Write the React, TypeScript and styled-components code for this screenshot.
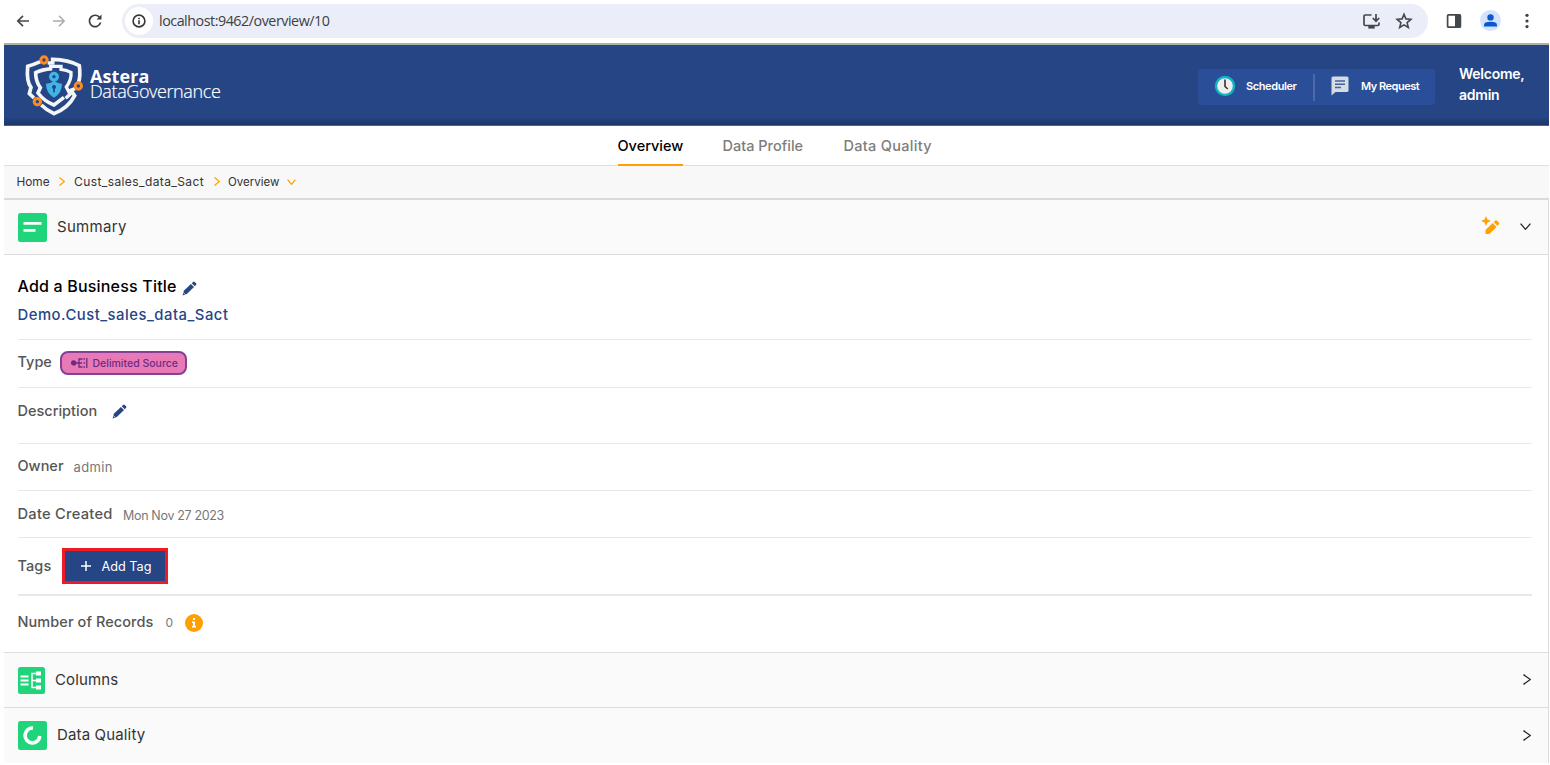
import React from "react";
import styled, { createGlobalStyle } from "styled-components";

const Global = createGlobalStyle`
  *{box-sizing:border-box}
  body{margin:0;background:#fff;overflow:hidden;font-family:Inter,"Liberation Sans",sans-serif;color:#000}
  svg{display:block;flex:none}
`;

const Page = styled.div`height:765px;display:flex;flex-direction:column;`;

const Text = styled.span<{
  $w: number; $size: number; $ls?: number; $weight?: number; $color?: string; $mt?: number; $ml?: number;
}>`
  display:block;flex:none;white-space:nowrap;
  width:${p => p.$w}px;
  font-size:${p => p.$size}px;
  line-height:20px;
  letter-spacing:${p => p.$ls ?? 0}px;
  font-weight:${p => p.$weight ?? 400};
  color:${p => p.$color ?? "#333"};
  margin-top:${p => p.$mt ?? 0}px;
  margin-left:${p => p.$ml ?? 0}px;
`;

/* Browser toolbar */
const Toolbar = styled.div`height:43px;flex:none;display:flex;align-items:flex-start;padding:4px 0 0 15px;`;
const NavButtons = styled.div`display:flex;gap:20px;height:34px;align-items:center;width:107px;`;
const Omnibox = styled.div`
  width:1306px;height:34px;border-radius:17px;background:#ebeef8;display:flex;align-items:center;padding:0 15px 0 3px;
`;
const InfoDot = styled.div`width:28px;height:28px;border-radius:50%;background:#fff;display:grid;place-items:center;`;
const Url = styled.div`
  margin-left:6px;flex:1;font:14.3px/20px "Open Sans","Liberation Sans",sans-serif;letter-spacing:-.47px;color:#3c4043;
`;
const BoxIcons = styled.div`display:flex;gap:14px;align-items:center;`;
const RightIcons = styled.div`display:flex;align-items:center;height:34px;padding-left:16px;`;
const Avatar = styled.div`width:21px;height:21px;border-radius:50%;background:#d3e3fd;display:grid;place-items:center;margin:-2px 24px 0 16px;`;

/* App shell */
const Shell = styled.div`margin-left:4px;width:1545px;border-top:2px solid #aeb1a8;`;
const Header = styled.header`
  height:81px;display:flex;align-items:flex-start;padding:3px 0 0 11px;
  background:linear-gradient(#264585 0,#264585 72px,#1d3568 80px,#7f8dae 81px);
`;
const Brand = styled.div`display:flex;flex:1;`;
const BrandText = styled.div`
  padding:20px 0 0 0;margin-left:-5px;color:#fff;font-family:"Open Sans","Noto Sans",sans-serif;white-space:nowrap;
`;
const BrandName = styled.div`font-size:18px;line-height:16px;font-weight:700;letter-spacing:.1px;`;
const BrandSub = styled.div`font-size:18px;line-height:14px;font-weight:300;letter-spacing:-.38px;-webkit-text-stroke:.2px #fff;`;
const Actions = styled.div`
  display:flex;align-items:center;width:237px;height:36px;margin-top:21px;border-radius:3px;background:#2a4e97;
  padding:0 0 3px 16px;
`;
const Divider = styled.div`width:2px;height:27px;background:#4f68a3;margin:3px 16px 0 15px;`;
const Welcome = styled.div`
  width:90px;margin:15px 0 0 24px;font-size:14px;line-height:21px;font-weight:600;color:#fff;letter-spacing:-.25px;
`;

const Tabs = styled.nav`
  height:40px;display:flex;justify-content:center;gap:40px;padding-right:4px;border-bottom:1px solid #dedfe1;
`;
const Tab = styled.div<{ $active?: boolean }>`
  height:40px;padding-top:10px;border-bottom:${p => (p.$active ? "2px solid #ffa000" : "none")};
`;
const Crumbs = styled.div`
  height:34px;background:#f8f8f8;border-bottom:2px solid #dadada;display:flex;align-items:center;padding:0 0 1px 12.5px;
`;
const Body = styled.main`border-right:1px solid #dcdcdc;height:563px;`;
const PanelHead = styled.div<{ $line?: boolean }>`
  height:55px;background:#fafafa;border-bottom:${p => (p.$line ? "1px solid #dcdcdc" : "none")};
  display:flex;align-items:center;padding:0 17px 0 13.5px;
`;
const PanelTools = styled.div`margin:-1px 0 0 auto;display:flex;align-items:center;gap:20px;`;
const Fields = styled.div`padding:0 16px 0 13.5px;height:398px;border-bottom:1px solid #dedede;`;
const Row = styled.div<{ $h: number; $b?: number; $up?: number }>`
  height:${p => p.$h}px;display:flex;align-items:center;border-bottom:${p => p.$b ?? 1}px solid #e8e8e8;
  padding-bottom:${p => p.$up ?? 0}px;
`;
const TitleBlock = styled.div`height:85px;border-bottom:1px solid #e8e8e8;padding-top:20px;`;
const Line = styled.div<{ $h: number }>`display:flex;align-items:center;height:${p => p.$h}px;`;
const Chip = styled.div`
  width:127px;height:24px;border:2px solid #863f93;border-radius:8px;background:#e879b7;display:flex;align-items:center;
  padding-left:9px;gap:5px;margin-left:8.5px;
`;
const AddButton = styled.button`
  width:106px;height:36px;border:3px solid #ed1c24;background:#264585;display:flex;align-items:center;padding:0 0 0 15px;
  margin:0 0 0 10.5px;gap:8px;font-family:inherit;
`;
const InfoBadge = styled.div`width:18px;height:18px;border-radius:50%;background:#ffa000;display:grid;place-items:center;margin-left:11px;`;
const PencilSlot = styled.div<{ $mt: number }>`margin-top:${p => p.$mt}px;`;

const Chevron = ({ dir, color, w = 6, h = 10, sw = 1.3 }: { dir: "right" | "down"; color: string; w?: number; h?: number; sw?: number }) => (
  <svg width={w} height={h} viewBox={`0 0 ${w} ${h}`} fill="none" stroke={color} strokeWidth={sw}>
    <path d={dir === "right" ? `M.5 .6L${w - 0.6} ${h / 2}L.5 ${h - 0.6}` : `M.6 .6L${w / 2} ${h - 0.7}L${w - 0.6} .6`} />
  </svg>
);

const Pencil = () => (
  <svg width="15" height="15" viewBox="0 0 15 15" fill="#264585">
    <path d="M1.8 9.7L8.9 3l3.1 3-7.2 7L.6 14.4z" />
    <path d="M9.7 2.2L11.1.9q.8-.7 1.6 0l1.4 1.4q.7.8 0 1.5l-1.3 1.4z" />
    <path d="M1.2 11.4l2.2 2.2" stroke="#fff" strokeWidth=".7" />
  </svg>
);

const Logo = () => (
  <svg width="80" height="75" viewBox="0 0 240 225" fill="none" stroke="#f4f5f8" strokeWidth="11">
    <path d="M76 41Q56 50 38 55Q34 100 48 118L43 137L57 150" />
    <path d="M98 45H113V34Q160 35 193 53Q197 82 191 102" />
    <path d="M180 122L168 127L179 143Q160 180 117 197Q95 187 79 171" />
    <path d="M110 62Q80 65 62 74Q62 100 76 119L69 135Q88 160 117 171L147 148" />
    <path d="M107 67V55H138V64Q156 66 168 73Q170 95 154 117L165 139L152 151" strokeWidth="10" />
    <g stroke="#ff8a1f" strokeWidth="9" fill="#264585">
      <circle cx="87" cy="36" r="9.5" />
      <circle cx="190" cy="114" r="9.5" />
      <circle cx="67" cy="161" r="9.5" />
    </g>
    <circle cx="117" cy="86" r="10" stroke="#3fb4e5" strokeWidth="10" />
    <path d="M93 107Q108 106 117 98Q126 106 141 107Q141 135 117 149Q93 135 93 107Z" fill="#3fb4e5" stroke="none" />
    <path d="M117 118V133" stroke="#264585" strokeWidth="5" />
    <circle cx="117" cy="117" r="6" fill="#264585" stroke="none" />
  </svg>
);

const SummaryIcon = () => (
  <svg width="29" height="29" viewBox="0 0 29 29"><rect width="29" height="29" rx="2.5" fill="#1fd47b" /><path d="M5.5 10.3H23.5M5.5 17.3H17.5" stroke="#fff" strokeWidth="2.8" /></svg>
);
const ColumnsIcon = () => (
  <svg width="27" height="27" viewBox="0 0 27 27" fill="none" stroke="#fff">
    <rect width="27" height="27" rx="2.5" fill="#1fd47b" stroke="none" />
    <path d="M2.5 9.5H10.5M2.5 13.5H10.5M2.5 17.5H10.5" strokeWidth="1.8" />
    <path d="M19 6.5H14V20.5H19M14 13.5H19" strokeWidth="1.5" />
    <path d="M18 6.5H23M18 13.5H23M18 20.5H23" strokeWidth="4" />
  </svg>
);
const QualityIcon = () => (
  <svg width="29" height="29" viewBox="0 0 29 29" fill="none">
    <rect width="29" height="29" rx="2.5" fill="#1fd47b" />
    <path d="M15 7.1A7.4 7.4 0 1 0 21.8 15" stroke="#fff" strokeWidth="3.6" />
  </svg>
);

export default function App() {
  return (
    <Page>
      <Global />
      <Toolbar>
        <NavButtons>
          <svg width="16" height="16" viewBox="0 0 16 16" fill="none" stroke="#45484b" strokeWidth="1.7"><path d="M14 8H3M8 2.8L2.8 8L8 13.2" /></svg>
          <svg width="16" height="16" viewBox="0 0 16 16" fill="none" stroke="#a9abad" strokeWidth="1.5"><path d="M2 8H13M8 2.8L13.2 8L8 13.2" /></svg>
          <svg width="16" height="16" viewBox="0 0 16 16" fill="none" stroke="#3c4043" strokeWidth="1.7"><path d="M12.8 4.7A5.7 5.7 0 1 0 13.6 9.5" /><path d="M14.5 1.6V6.6H9.5z" fill="#3c4043" stroke="none" /></svg>
        </NavButtons>
        <Omnibox>
          <InfoDot>
            <svg width="14" height="14" viewBox="0 0 14 14" fill="none" stroke="#34373a" strokeWidth="1.6"><circle cx="7" cy="7" r="5.9" /><path d="M7 6.3V10.2M7 3.8V5.2" /></svg>
          </InfoDot>
          <Url>localhost:9462/overview/10</Url>
          <BoxIcons>
            <svg width="19" height="17" viewBox="0 0 19 17" fill="none" stroke="#45484b" strokeWidth="1.7"><path d="M9.5 2H3.2Q2 2 2 3.2V11.3Q2 12.5 3.2 12.5H15.8Q17 12.5 17 11.3V9.5M14 1V8M10.8 5L14 8.2L17.2 5" /><path d="M6.3 14.3H12.7" strokeWidth="2.6" /></svg>
            <svg width="18" height="18" viewBox="0 0 18 18" fill="none" stroke="#45484b" strokeWidth="1.6"><path d="M9 2.3L10.9 6.9L15.9 7.3L12.1 10.6L13.3 15.5L9 12.9L4.7 15.5L5.9 10.6L2.1 7.3L7.1 6.9Z" /></svg>
          </BoxIcons>
        </Omnibox>
        <RightIcons>
          <svg width="20" height="16" viewBox="0 0 20 16"><rect x="3.6" y="1.8" width="12.8" height="12.4" rx="1" fill="none" stroke="#45484b" strokeWidth="1.7" /><path d="M11 1.5H16.5V14.5H11Z" fill="#45484b" /></svg>
          <Avatar><svg width="13" height="13" viewBox="0 0 13 13" fill="#0b57d0"><circle cx="6.5" cy="3.4" r="3.2" /><path d="M0 12.5V10.8Q0 7.8 6.5 7.8T13 10.8V12.5Z" /></svg></Avatar>
          <svg width="4" height="16" viewBox="0 0 4 16" fill="#3c4043"><circle cx="2" cy="2.3" r="1.6" /><circle cx="2" cy="8" r="1.6" /><circle cx="2" cy="13.6" r="1.6" /></svg>
        </RightIcons>
      </Toolbar>

      <Shell>
        <Header>
          <Brand>
            <Logo />
            <BrandText>
              <BrandName>Astera</BrandName>
              <BrandSub>DataGovernance</BrandSub>
            </BrandText>
          </Brand>
          <Actions>
            <svg width="22" height="22" viewBox="0 0 22 22"><circle cx="11" cy="11" r="9" fill="#f1efec" stroke="#10b5c4" strokeWidth="2.4" /><path d="M11 4.5V11.5L13.8 14" fill="none" stroke="#333" strokeWidth="1.6" /></svg>
            <Text $w={52} $size={11} $weight={600} $color="#fff" $ls={-0.4} $ml={10} $mt={1}>Scheduler</Text>
            <Divider />
            <svg width="18" height="20" viewBox="0 0 18 20"><path d="M2 .5H16Q17.5 .5 17.5 2V14.5Q17.5 16 16 16H4.5L.5 19.5V2Q.5 .5 2 .5Z" fill="#d5dce2" /><path d="M4 5H14M4 8.3H14M4 11.5H10" stroke="#44629f" strokeWidth="1.4" /></svg>
            <Text $w={60} $size={11} $weight={600} $color="#fff" $ls={-0.48} $ml={12} $mt={1}>My Request</Text>
          </Actions>
          <Welcome>Welcome,<br />admin</Welcome>
        </Header>

        <Tabs>
          <Tab $active><Text $w={65} $size={14.5} $weight={500} $color="#000">Overview</Text></Tab>
          <Tab><Text $w={81} $size={14.5} $weight={500} $color="#7d7d7d">Data Profile</Text></Tab>
          <Tab><Text $w={88} $size={14.5} $weight={500} $color="#7d7d7d" $ls={0.3}>Data Quality</Text></Tab>
        </Tabs>

        <Crumbs>
          <Text $w={42} $size={11.8}>Home</Text>
          <Chevron dir="right" color="#ffa000" h={9} />
          <Text $w={139.5} $size={12} $ls={0.41} $ml={9.5}>Cust_sales_data_Sact</Text>
          <Chevron dir="right" color="#ffa000" h={9} />
          <Text $w={58.5} $size={11.5} $ml={8.5}>Overview</Text>
          <Chevron dir="down" color="#ffa000" w={9} h={6} />
        </Crumbs>

        <Body>
          <PanelHead $line>
            <SummaryIcon />
            <Text $w={90} $size={15} $ls={0.3} $ml={10.5} $mt={-1}>Summary</Text>
            <PanelTools>
              <svg width="19" height="21" viewBox="0 0 19 21" fill="#ffa000"><path d="M5 0L6.4 3.6L10 5L6.4 6.4L5 10L3.6 6.4L0 5L3.6 3.6Z" /><path d="M4.5 14L11.6 7L15.5 10.9L8.4 18H4.5Z" /><path d="M12.6 6L14 4.7Q15 3.9 16 4.7L17.8 6.5Q18.5 7.5 17.7 8.4L16.4 9.8Z" /></svg>
              <Chevron dir="down" color="#222" w={11} h={7} />
            </PanelTools>
          </PanelHead>
          <Fields>
            <TitleBlock>
              <Line $h={22}>
                <Text $w={164} $size={16} $weight={500} $color="#000" $ls={0.19}>Add a Business Title</Text>
                <PencilSlot $mt={4}><Pencil /></PencilSlot>
              </Line>
              <Line $h={36}><Text $w={212} $size={14.8} $weight={500} $color="#264585" $ls={0.52}>Demo.Cust_sales_data_Sact</Text></Line>
            </TitleBlock>
            <Row $h={48} $up={1}>
              <Text $w={34} $size={14.5} $weight={500} $color="#555" $mt={-2}>Type</Text>
              <Chip>
                <svg width="17" height="10" viewBox="0 0 17 10" fill="none" stroke="#6f2a7f" strokeWidth="1.3"><circle cx="2.6" cy="5" r="2" fill="#6f2a7f" /><path d="M4 5H11M11.5 1H8V9H11.5M12.5 1H14M12.5 5H14M12.5 9H14M15.8 0V10" /></svg>
                <Text $w={87} $size={10.5} $weight={500} $color="#6f2a7f" $ml={-0.5} $mt={1}>Delimited Source</Text>
              </Chip>
            </Row>
            <Row $h={56} $up={8}>
              <Text $w={94.5} $size={14.5} $weight={500} $color="#555" $mt={-2}>Description</Text>
              <Pencil />
            </Row>
            <Row $h={47} $up={2}>
              <Text $w={56} $size={14.5} $weight={500} $color="#555">Owner</Text>
              <Text $w={80} $size={13} $color="#777" $ls={0.35} $mt={2}>admin</Text>
            </Row>
            <Row $h={47}>
              <Text $w={105.5} $size={14.7} $weight={500} $color="#555" $ls={0.25}>Date Created</Text>
              <Text $w={120} $size={12.5} $color="#777" $ls={-0.33} $mt={3}>Mon Nov 27 2023</Text>
            </Row>
            <Row $h={58} $b={2}>
              <Text $w={34} $size={14.5} $weight={500} $color="#555" $ls={0.1}>Tags</Text>
              <AddButton>
                <svg width="12" height="12" viewBox="0 0 12 12" stroke="#fff" strokeWidth="1.5"><path d="M6 1V11M1 6H11" /></svg>
                <Text $w={54} $size={12.7} $color="#fff" $ml={-0.5} $mt={1}>Add Tag</Text>
              </AddButton>
            </Row>
            <Row $h={54} $b={0}>
              <Text $w={148} $size={14.5} $weight={500} $color="#555" $ls={0.08} $mt={-2}>Number of Records</Text>
              <Text $w={8} $size={12} $color="#777">0</Text>
              <InfoBadge><svg width="6" height="10" viewBox="0 0 6 10" fill="#fff"><path d="M2 0H4V2H2ZM1 3.6H4V8H5V9.5H1V8H2V5H1Z" /></svg></InfoBadge>
            </Row>
          </Fields>
          <PanelHead $line>
            <ColumnsIcon />
            <Text $w={90} $size={15} $ls={0.15} $ml={10.5} $mt={-1}>Columns</Text>
            <PanelTools><Chevron dir="right" color="#222" w={8} h={11} /></PanelTools>
          </PanelHead>
          <PanelHead>
            <QualityIcon />
            <Text $w={100} $size={15} $ls={0.15} $ml={10.5} $mt={-1}>Data Quality</Text>
            <PanelTools><Chevron dir="right" color="#222" w={8} h={11} /></PanelTools>
          </PanelHead>
        </Body>
      </Shell>
    </Page>
  );
}
